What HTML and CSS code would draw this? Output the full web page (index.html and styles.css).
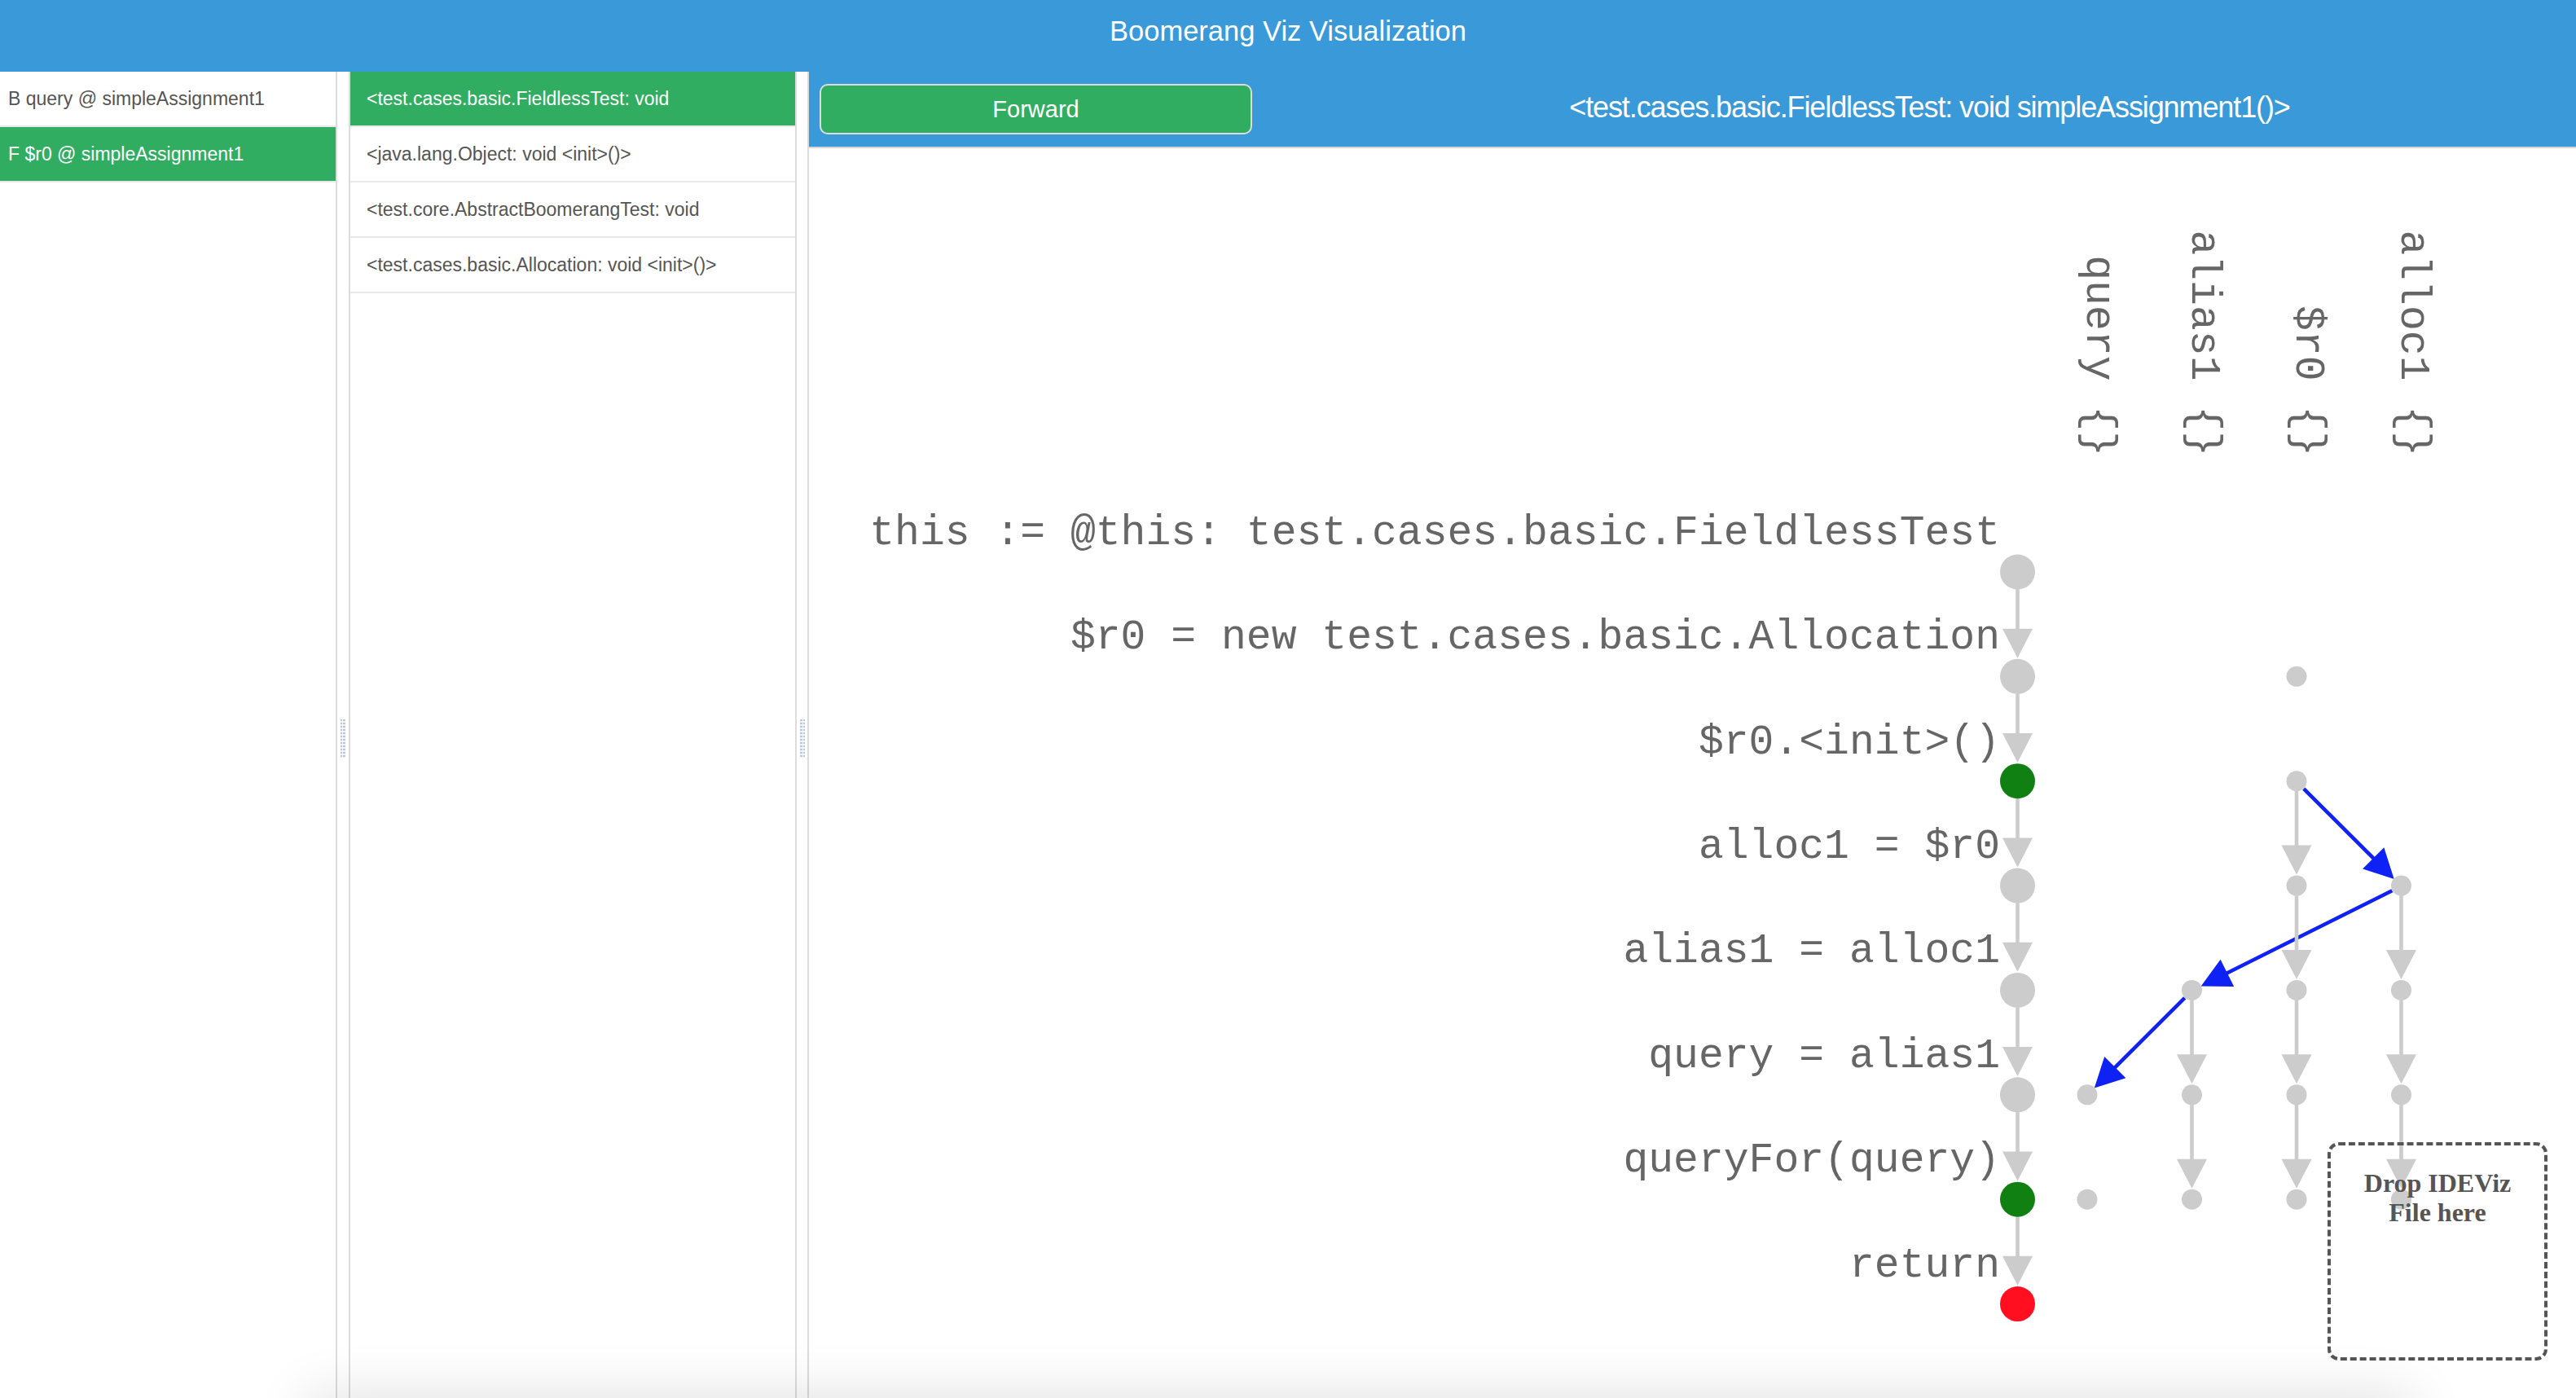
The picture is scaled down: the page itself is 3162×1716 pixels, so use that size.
FILE: index.html
```html
<!DOCTYPE html>
<html lang="en">
<head>
<meta charset="utf-8">
<title>Boomerang Viz Visualization</title>
<link rel="stylesheet" href="styles.css">
</head>
<body>
<div class="app">
  <header class="topbar">Boomerang Viz Visualization</header>
  <div class="panes">
    <aside class="list list-left">
      <div class="item">B query @ simpleAssignment1</div>
      <div class="item active">F $r0 @ simpleAssignment1</div>
    </aside>
    <div class="gutter"><div class="grip"></div></div>
    <nav class="list list-mid">
      <div class="item active">&lt;test.cases.basic.FieldlessTest: void</div>
      <div class="item">&lt;java.lang.Object: void &lt;init&gt;()&gt;</div>
      <div class="item">&lt;test.core.AbstractBoomerangTest: void</div>
      <div class="item">&lt;test.cases.basic.Allocation: void &lt;init&gt;()&gt;</div>
    </nav>
    <div class="gutter gutter-2"><div class="grip"></div></div>
    <main class="main">
      <div class="toolbar">
        <button class="fwd">Forward</button>
        <div class="method">&lt;test.cases.basic.FieldlessTest: void simpleAssignment1()&gt;</div>
      </div>
      <div class="canvas">
        <svg class="graph" width="2169" height="1534" viewBox="993 182 2169 1534" xmlns="http://www.w3.org/2000/svg">
          <g class="heads">
            <text transform="translate(2562 560) rotate(90)">query {}</text>
            <text transform="translate(2690.5 560) rotate(90)">alias1 {}</text>
            <text transform="translate(2819 560) rotate(90)">$r0 {}</text>
            <text transform="translate(2947.5 560) rotate(90)">alloc1 {}</text>
          </g>
          <g class="stmts">
            <text x="2455" y="668">this := @this: test.cases.basic.FieldlessTest</text>
            <text x="2455" y="796.36">$r0 = new test.cases.basic.Allocation</text>
            <text x="2455" y="924.72">$r0.&lt;init&gt;()</text>
            <text x="2455" y="1053.08">alloc1 = $r0</text>
            <text x="2455" y="1181.44">alias1 = alloc1</text>
            <text x="2455" y="1309.8">query = alias1</text>
            <text x="2455" y="1438.16">queryFor(query)</text>
            <text x="2455" y="1566.52">return</text>
          </g>
          <g class="bedges">
            <line x1="2827.8" y1="968.1" x2="2914" y2="1054.2"/>
            <line x1="2936.3" y1="1093.3" x2="2733" y2="1194.7"/>
            <line x1="2681.7" y1="1224.8" x2="2595.5" y2="1310.9"/>
          </g>
          <g class="barrows">
            <polygon points="2926.3,1040.3 2900.1,1066.5 2938.7,1078.9"/>
            <polygon points="2725.6,1177.8 2742.2,1210.9 2701.7,1210.4"/>
            <polygon points="2583.2,1297 2609.4,1323.2 2570.8,1335.6"/>
          </g>
          <g class="edges">
            <line x1="2476.5" y1="723" x2="2476.5" y2="772.66"/>
            <line x1="2476.5" y1="851.36" x2="2476.5" y2="901.02"/>
            <line x1="2476.5" y1="979.72" x2="2476.5" y2="1029.38"/>
            <line x1="2476.5" y1="1108.08" x2="2476.5" y2="1157.74"/>
            <line x1="2476.5" y1="1236.44" x2="2476.5" y2="1286.1"/>
            <line x1="2476.5" y1="1364.8" x2="2476.5" y2="1414.46"/>
            <line x1="2476.5" y1="1493.16" x2="2476.5" y2="1542.82"/>
            <line x1="2819" y1="970.72" x2="2819" y2="1038.58"/>
            <line x1="2819" y1="1099.08" x2="2819" y2="1166.94"/>
            <line x1="2819" y1="1227.44" x2="2819" y2="1295.3"/>
            <line x1="2819" y1="1355.8" x2="2819" y2="1423.66"/>
            <line x1="2947.5" y1="1099.08" x2="2947.5" y2="1166.94"/>
            <line x1="2947.5" y1="1227.44" x2="2947.5" y2="1295.3"/>
            <line x1="2947.5" y1="1355.8" x2="2947.5" y2="1423.66"/>
            <line x1="2690.5" y1="1227.44" x2="2690.5" y2="1295.3"/>
            <line x1="2690.5" y1="1355.8" x2="2690.5" y2="1423.66"/>
          </g>
          <g class="arrows">
            <polygon points="2458,771.66 2495,771.66 2476.5,807.66"/>
            <polygon points="2458,900.02 2495,900.02 2476.5,936.02"/>
            <polygon points="2458,1028.38 2495,1028.38 2476.5,1064.38"/>
            <polygon points="2458,1156.74 2495,1156.74 2476.5,1192.74"/>
            <polygon points="2458,1285.1 2495,1285.1 2476.5,1321.1"/>
            <polygon points="2458,1413.46 2495,1413.46 2476.5,1449.46"/>
            <polygon points="2458,1541.82 2495,1541.82 2476.5,1577.82"/>
            <polygon points="2800.5,1037.58 2837.5,1037.58 2819,1073.58"/>
            <polygon points="2800.5,1165.94 2837.5,1165.94 2819,1201.94"/>
            <polygon points="2800.5,1294.3 2837.5,1294.3 2819,1330.3"/>
            <polygon points="2800.5,1422.66 2837.5,1422.66 2819,1458.66"/>
            <polygon points="2929,1165.94 2966,1165.94 2947.5,1201.94"/>
            <polygon points="2929,1294.3 2966,1294.3 2947.5,1330.3"/>
            <polygon points="2929,1422.66 2966,1422.66 2947.5,1458.66"/>
            <polygon points="2672,1294.3 2709,1294.3 2690.5,1330.3"/>
            <polygon points="2672,1422.66 2709,1422.66 2690.5,1458.66"/>
          </g>
          <g class="nodes">
            <circle cx="2476.5" cy="702" r="21.5"/>
            <circle cx="2476.5" cy="830.36" r="21.5"/>
            <circle class="green" cx="2476.5" cy="958.72" r="21.5"/>
            <circle cx="2476.5" cy="1087.08" r="21.5"/>
            <circle cx="2476.5" cy="1215.44" r="21.5"/>
            <circle cx="2476.5" cy="1343.8" r="21.5"/>
            <circle class="green" cx="2476.5" cy="1472.16" r="21.5"/>
            <circle class="red" cx="2476.5" cy="1600.52" r="21.5"/>
            <circle cx="2562" cy="1343.8" r="12.5"/>
            <circle cx="2562" cy="1472.16" r="12.5"/>
            <circle cx="2690.5" cy="1215.44" r="12.5"/>
            <circle cx="2690.5" cy="1343.8" r="12.5"/>
            <circle cx="2690.5" cy="1472.16" r="12.5"/>
            <circle cx="2819" cy="830.36" r="12.5"/>
            <circle cx="2819" cy="958.72" r="12.5"/>
            <circle cx="2819" cy="1087.08" r="12.5"/>
            <circle cx="2819" cy="1215.44" r="12.5"/>
            <circle cx="2819" cy="1343.8" r="12.5"/>
            <circle cx="2819" cy="1472.16" r="12.5"/>
            <circle cx="2947.5" cy="1087.08" r="12.5"/>
            <circle cx="2947.5" cy="1215.44" r="12.5"/>
            <circle cx="2947.5" cy="1343.8" r="12.5"/>
            <circle cx="2947.5" cy="1472.16" r="12.5"/>
          </g>
        </svg>
      </div>
      <div class="dropzone">Drop IDEViz<br>File here</div>
    </main>
  </div>
  <div class="shade"></div>
</div>
</body>
</html>
```

FILE: styles.css
```css
html, body {
  margin: 0;
  height: 100%;
}

body {
  font-family: "Liberation Sans", Arial, sans-serif;
  background: #fff;
  overflow: hidden;
}

.app {
  display: flex;
  flex-direction: column;
  height: 100vh;
}

.topbar {
  height: 88px;
  box-sizing: border-box;
  padding-top: 18px;
  background: #3a99d8;
  color: #fff;
  text-align: center;
  font-size: 34.5px;
  line-height: 40px;
  flex-shrink: 0;
}

.panes {
  display: flex;
  flex: 1;
  min-height: 0;
}

.list-left {
  width: 412px;
  border-right: 2px solid #dcdcdc;
  flex-shrink: 0;
}

.list-mid {
  width: 546px;
  border-left: 2px solid #dcdcdc;
  border-right: 2px solid #dcdcdc;
  flex-shrink: 0;
}

.item {
  height: 66px;
  line-height: 66px;
  font-size: 23px;
  color: #555;
  border-bottom: 2px solid #e9e9e9;
  white-space: nowrap;
  overflow: hidden;
}

.list-left .item {
  padding-left: 10px;
}

.list-mid .item {
  padding-left: 20px;
}

.item.active {
  background: #31ad62;
  color: #fff;
}

.gutter {
  width: 14px;
  flex-shrink: 0;
  display: flex;
  align-items: center;
  justify-content: center;
}

.gutter-2 {
  width: 13px;
  justify-content: flex-start;
  padding-left: 4px;
  box-sizing: border-box;
}

.grip {
  width: 6px;
  height: 47px;
  margin-top: 8px;
  background:
    linear-gradient(to right, transparent 0 2.5px, rgba(255,255,255,0.8) 2.5px 3.5px, transparent 3.5px),
    repeating-linear-gradient(to bottom, #bccad9 0 2px, #eef2f6 2px 4px);
}

.main {
  flex: 1;
  min-width: 0;
  border-left: 2px solid #dcdcdc;
  position: relative;
  overflow: hidden;
  display: flex;
  flex-direction: column;
}

.toolbar {
  height: 92px;
  flex-shrink: 0;
  background: #3a99d8;
  border-bottom: 2px solid #d6d6d6;
  display: flex;
  align-items: center;
}

.fwd {
  margin-left: 13px;
  width: 531px;
  height: 62px;
  box-sizing: border-box;
  border: 2px solid #dcdcdc;
  border-radius: 10px;
  background: #31ad62;
  color: #fff;
  font-family: "Liberation Sans", Arial, sans-serif;
  font-size: 29px;
  padding: 0;
  flex-shrink: 0;
}

.method {
  flex: 1;
  margin-left: 38px;
  margin-bottom: 5px;
  text-align: center;
  color: #fff;
  font-size: 36px;
  letter-spacing: -1.1px;
  white-space: nowrap;
}

.canvas {
  flex: 1;
  position: relative;
}

.graph {
  display: block;
}

.heads text,
.stmts text {
  font-family: "Liberation Mono", "Courier New", monospace;
  font-size: 51.4px;
  fill: #666;
  text-anchor: end;
}

.edges line {
  stroke: #cccccc;
  stroke-width: 4.6;
}

.arrows polygon {
  fill: #cccccc;
}

.bedges line {
  stroke: #0f22f5;
  stroke-width: 4.6;
}

.barrows polygon {
  fill: #0f22f5;
}

.nodes circle {
  fill: #cccccc;
}

.nodes .green {
  fill: #118013;
}

.nodes .red {
  fill: #ff0f1f;
}

.dropzone {
  position: absolute;
  right: 35px;
  bottom: 46px;
  width: 270px;
  height: 268px;
  box-sizing: border-box;
  border: 4px dashed #555;
  border-radius: 14px;
  padding-top: 28px;
  text-align: center;
  font-family: "Liberation Serif", "Times New Roman", serif;
  font-weight: bold;
  font-size: 32px;
  line-height: 36px;
  color: #555;
}

.shade {
  position: fixed;
  left: 380px;
  width: 2580px;
  bottom: -60px;
  height: 60px;
  box-shadow: 0 0 70px rgba(0, 0, 0, 0.14);
  pointer-events: none;
}
```
